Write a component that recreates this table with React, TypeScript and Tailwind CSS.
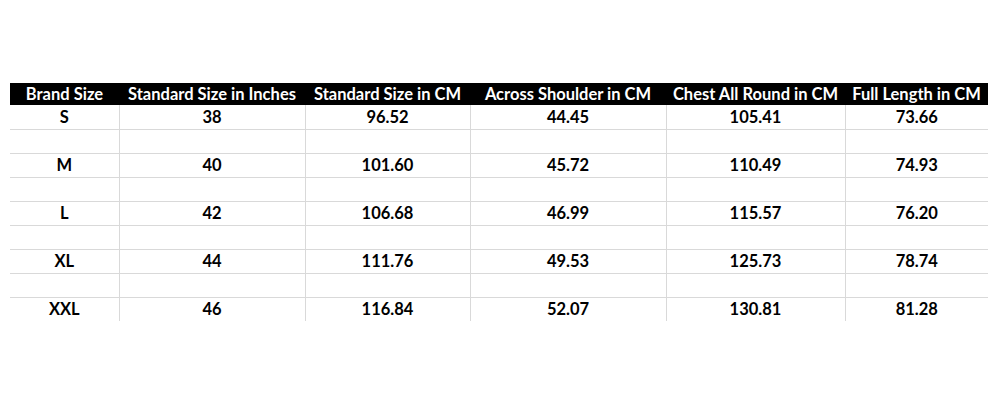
const headers = [
  "Brand Size",
  "Standard Size in Inches",
  "Standard Size in CM",
  "Across Shoulder in CM",
  "Chest All Round in CM",
  "Full Length in CM",
];

const widths = ["w-[109px]", "w-[186px]", "w-[165px]", "w-[196px]", "w-[179px]", "w-[143px]"];

const rows = [
  ["S", "38", "96.52", "44.45", "105.41", "73.66"],
  ["M", "40", "101.60", "45.72", "110.49", "74.93"],
  ["L", "42", "106.68", "46.99", "115.57", "76.20"],
  ["XL", "44", "111.76", "49.53", "125.73", "78.74"],
  ["XXL", "46", "116.84", "52.07", "130.81", "81.28"],
];

export default function App() {
  return (
    <main className="w-[1000px] h-[400px] bg-white pt-[83px] pl-[10px] font-['Lato',sans-serif] font-bold text-[16.5px] text-black">
      <table className="border-collapse table-fixed w-[978px]">
        <thead>
          <tr className="bg-black text-white h-[22px]">
            {headers.map((h, i) => (
              <th key={h} className={`${widths[i]} p-0 text-center font-bold leading-[22px] whitespace-nowrap`}>
                {h}
              </th>
            ))}
          </tr>
        </thead>
        <tbody>
          {rows.map((r, ri) => (
            <>
              <tr key={r[0]} className="h-[24px]">
                {r.map((c, ci) => (
                  <td
                    key={ci}
                    className={`p-0 text-center leading-[22px] border-[#d9d9d9] ${ci > 0 ? "border-l" : ""} ${ri < rows.length - 1 ? "border-b" : ""}`}
                  >
                    {c}
                  </td>
                ))}
              </tr>
              {ri < rows.length - 1 && (
                <tr key={r[0] + "-gap"} className="h-[24px]">
                  {r.map((_, ci) => (
                    <td key={ci} className={`p-0 border-b border-[#d9d9d9] ${ci > 0 ? "border-l" : ""}`} />
                  ))}
                </tr>
              )}
            </>
          ))}
        </tbody>
      </table>
    </main>
  );
}
